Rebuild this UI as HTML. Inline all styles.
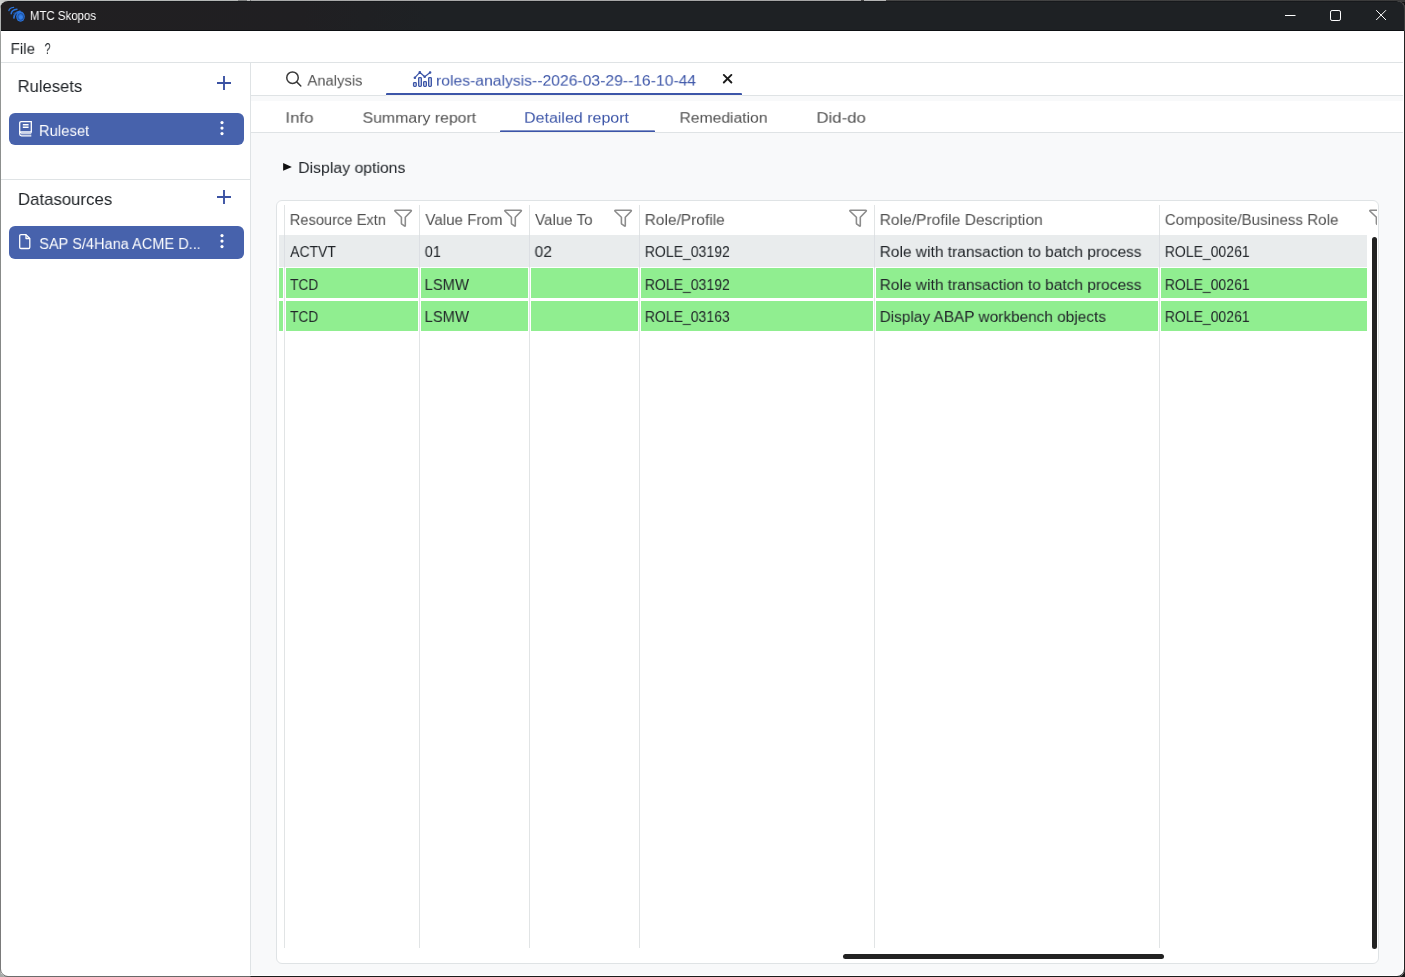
<!DOCTYPE html>
<html>
<head>
<meta charset="utf-8">
<title>MTC Skopos</title>
<style>
*{box-sizing:border-box;margin:0;padding:0}
html,body{width:1405px;height:977px;overflow:hidden;background:#fff}
body{font-family:"Liberation Sans",sans-serif;font-size:15px;color:#212529;position:relative}
.abs{position:absolute}
.t{position:absolute;white-space:nowrap;line-height:1;font-size:16px;transform-origin:0 0;will-change:transform}
/* desktop bits behind the window */
#desk{left:0;top:0;width:1405px;height:977px;background:linear-gradient(180deg,#d8dad9 0,#aaacab 30px,#a6a9a7 100%) 0 0/251px 100% no-repeat,#141414}
#toprow{left:0;top:0;width:1405px;height:2px;background:linear-gradient(90deg,#cfd1d0 0,#b8bab9 12px,#b5b7b6 238px,#7f7f7f 238px,#7f7f7f 247px,#bdbdbd 247px,#bdbdbd 250px,#777 250px,#777 251px,#aaa 251px,#a5a5a5 861px,#444 861px,#444 864px,#b5b5b5 864px,#b5b5b5 886px,#464646 886px,#3a3a3a 100%)}
/* window */
#win{left:0;top:1px;width:1405px;height:976px;border-radius:8px;background:#fff;overflow:hidden}
#bL{left:0;top:0;width:1px;height:976px;background:linear-gradient(180deg,#b6b8b7 0,#acaead 30px,#9a9d9b 34px,#8d908e 150px,#808281 500px,#7a7a7a 976px);z-index:50}
#bR{left:1404px;top:0;width:1px;height:976px;background:linear-gradient(180deg,#3c3c3c 0,#3c3c3c 30px,#232323 30px,#232323 100%);z-index:50}
#bB{left:0;top:975px;width:1405px;height:1px;background:linear-gradient(90deg,#6c6c6c 0,#666 250px,#1c1c1c 251px,#1c1c1c 100%);z-index:50}
#title{left:0;top:0;width:1405px;height:30px;background:linear-gradient(90deg,#211f21 0,#201f22 300px,#1e2124 430px,#1e2124 100%);border-bottom:1px solid #0d1013;border-top:1px solid #17191c}
/* menu */
#menu{left:1px;top:30px;width:1402px;height:32px;background:#fff;border-bottom:1px solid #dfe3e5}
/* sidebar */
#side{left:1px;top:62px;width:250px;height:912px;background:#fff;border-right:1px solid #dfe3e5}
.h{font-size:17.5px;color:#212529}
.btn{position:absolute;left:8px;width:235px;height:32px;background:#4762ac;border-radius:6px;color:#fff}
.sep{position:absolute;left:0;width:249px;height:1px;background:#dfe3e5}
/* main */
#main{left:251px;top:62px;width:1152px;height:912px;background:#f8f9fa}
#tabs1{left:0;top:0;width:1152px;height:33px;background:#fff;border-bottom:1px solid #dfe3e5}
#tabs2{left:0;top:38px;width:1152px;height:32px;background:#fff;border-bottom:1px solid #dfe3e5}
.ul{position:absolute;height:3px;background:linear-gradient(#3c55a8 0,#3c55a8 2px,#f1f2ef 2px,#f1f2ef 3px);border-radius:1px 1px 0 0}
.g{color:#495057}
.b{color:#4762ac}
/* grid */
#grid{left:25px;top:137px;width:1103px;height:764px;background:#fff;border:1px solid #dfe3e5;border-radius:6px;overflow:hidden}
.cl{position:absolute;top:4px;width:1px;height:743px;background:#e1e4e5}
.row{position:absolute;left:1px;width:1088px}
.c{position:absolute;background:#90ee90}
.hd{color:#495057}
</style>
</head>
<body>
<svg width="0" height="0" style="position:absolute"><defs><path id="fun" d="M2.500 2.300H17.700Q18.800 2.300 18.100 3.200L12.300 9.300V17.400Q12.300 18.600 11.300 17.900L8.900 16.200Q8.400 15.900 8.400 15.300V9.300L2.100 3.200Q1.400 2.300 2.500 2.300Z" fill="none" stroke="#8c8c8c" stroke-width="1.600" stroke-linejoin="round"/></defs></svg>
<div id="desk" class="abs"></div>
<div id="toprow" class="abs"></div>
<div class="abs" style="left:1395px;top:0;width:10px;height:10px;border-right:1px solid #3c3c3c;border-top:1px solid #3a3a3a;border-top-right-radius:9px;z-index:60"></div>
<div id="win" class="abs">
  <div id="title" class="abs">
    <svg class="abs" style="left:7px;top:4px" width="20" height="20" viewBox="0 0 20 20">
      <g fill="none" stroke="#2a72d8" stroke-linecap="round">
        <path d="M1.900 4.600Q2.300 1.800 6.600 1.300" stroke-width="1.300"/>
        <path d="M4.200 7.800Q4.400 3.800 10 3.200" stroke-width="1.500"/>
        <path d="M6.900 12Q6.800 6.800 13 5.400" stroke-width="1.700"/>
        <path d="M6.300 7.300L9.500 6.200M7 9L10 7.500" stroke-width="0.800" stroke="#1d4f9a"/>
      </g>
      <ellipse cx="13.500" cy="10.600" rx="4.300" ry="5.100" fill="#2a72d8"/>
      <ellipse cx="13.700" cy="10.900" rx="2.900" ry="3.400" fill="none" stroke="#1a4486" stroke-width="0.700"/>
      <circle cx="13.900" cy="11.300" r="1.700" fill="#3580e6"/>
    </svg>
    <svg class="abs" style="left:1280px;top:4px" width="120" height="22" viewBox="0 0 120 22" fill="none" stroke="#fff" stroke-width="1">
      <path d="M5 9.5H15.5"/>
      <rect x="50.500" y="4.500" width="10" height="10" rx="1.600"/>
      <path d="M96.200 4.200L106 14M106 4.200L96.200 14"/>
    </svg>
  </div>
  <div id="menu" class="abs">
  </div>
  <div id="side" class="abs">
    <svg class="abs" style="left:215px;top:12px" width="16" height="16" viewBox="0 0 16 16" stroke="#3b52a3" stroke-width="1.900" fill="none"><path d="M8 1V15M1 8H15"/></svg>
    <div class="btn" style="top:50px">
      <svg class="abs" style="left:9px;top:7px" width="16" height="18" viewBox="0 0 16 18" fill="none" stroke="#fff" stroke-width="1.300">
        <path d="M1.700 14V3.200Q1.700 1.700 3.200 1.700H13.300V12H3.500Q1.700 12 1.700 14Q1.700 15.800 3.500 15.800H13.300"/>
        <path d="M4.800 4.800H10.600M4.800 7.300H10.600" stroke-width="1.500"/>
        <path d="M3 13.800H13.300" stroke-width="1"/>
      </svg>
      <svg class="abs" style="left:209px;top:7px" width="8" height="18" viewBox="0 0 8 18" fill="#fff"><circle cx="4" cy="2.600" r="1.600"/><circle cx="4" cy="8.100" r="1.600"/><circle cx="4" cy="13.600" r="1.600"/></svg>
    </div>
    <div class="sep" style="top:116px"></div>
    <svg class="abs" style="left:215px;top:126px" width="16" height="16" viewBox="0 0 16 16" stroke="#3b52a3" stroke-width="1.900" fill="none"><path d="M8 1V15M1 8H15"/></svg>
    <div class="btn" style="top:163px;height:33px">
      <svg class="abs" style="left:9px;top:7px" width="14" height="18" viewBox="0 0 14 18" fill="none" stroke="#fff" stroke-width="1.300" stroke-linejoin="round">
        <path d="M1.700 3V14.300Q1.700 15.500 3 15.500H10.500Q11.800 15.500 11.800 14.300V5.500L8 1.700H3Q1.700 1.700 1.700 3Z"/>
        <path d="M8 1.700V5.500H11.800"/>
      </svg>
      <svg class="abs" style="left:209px;top:7px" width="8" height="18" viewBox="0 0 8 18" fill="#fff"><circle cx="4" cy="2.600" r="1.600"/><circle cx="4" cy="8.100" r="1.600"/><circle cx="4" cy="13.600" r="1.600"/></svg>
    </div>
  </div>
  <div id="main" class="abs">
    <div id="tabs1" class="abs">
      <svg class="abs" style="left:34px;top:7px" width="18" height="18" viewBox="0 0 18 18" fill="none" stroke="#3a3a3a" stroke-width="1.500" stroke-linecap="round"><circle cx="7.500" cy="7.700" r="5.750"/><path d="M11.700 11.900L15.800 16"/></svg>
      <svg class="abs" style="left:160px;top:7px" width="24" height="20" viewBox="0 0 24 20" fill="rgba(61,86,168,.28)" stroke="#3d56a8" stroke-width="1.200" stroke-linejoin="round" stroke-linecap="round">
        <path d="M3.900 7.700L8.800 2.300L13.700 6.700L19.100 2.500" fill="none"/>
        <circle cx="3.900" cy="7.700" r="0.700" fill="#3d56a8"/><circle cx="8.800" cy="2.300" r="0.700" fill="#3d56a8"/><circle cx="13.700" cy="6.700" r="0.700" fill="#3d56a8"/><circle cx="19.100" cy="2.500" r="0.700" fill="#3d56a8"/>
        <rect x="2.500" y="12.700" width="2.800" height="3.600" rx="0.800"/>
        <rect x="7.600" y="7.600" width="2.800" height="8.700" rx="0.800"/>
        <rect x="12.600" y="11.600" width="2.800" height="4.700" rx="0.800"/>
        <rect x="17.600" y="7.600" width="2.800" height="8.700" rx="0.800"/>
      </svg>
      <svg class="abs" style="left:471px;top:10px" width="12" height="12" viewBox="0 0 12 12" stroke="#1a1a1a" stroke-width="1.900" stroke-linecap="round" fill="none"><path d="M1.800 1.900L9.400 9.500M9.400 1.900L1.800 9.500"/></svg>
      <div class="ul" style="left:135px;top:30px;width:356px"></div>
    </div>
    <div id="tabs2" class="abs">
      <div class="ul" style="left:249px;top:29px;width:155px;background:linear-gradient(#8494c8 0,#8494c8 1px,#3c55a8 1px,#3c55a8 2px,#f1f2ef 2px,#f1f2ef 3px)"></div>
    </div>
    <svg class="abs" style="left:31px;top:99px" width="11" height="10" viewBox="0 0 11 10"><path d="M1.100 1.100L9.900 4.900L1.100 8.700Z" fill="#111"/></svg>
    <div id="grid" class="abs">
<div class="cl" style="left:7px"></div>
<div class="cl" style="left:142px"></div>
<div class="cl" style="left:252px"></div>
<div class="cl" style="left:362px"></div>
<div class="cl" style="left:597px"></div>
<div class="cl" style="left:882px"></div>
<svg class="abs" style="left:116px;top:7px" width="20" height="20" viewBox="0 0 20 20"><use href="#fun"/></svg>
<svg class="abs" style="left:226px;top:7px" width="20" height="20" viewBox="0 0 20 20"><use href="#fun"/></svg>
<svg class="abs" style="left:336px;top:7px" width="20" height="20" viewBox="0 0 20 20"><use href="#fun"/></svg>
<svg class="abs" style="left:571px;top:7px" width="20" height="20" viewBox="0 0 20 20"><use href="#fun"/></svg>
<div class="abs" style="left:1091px;top:7px;width:9px;height:20px;overflow:hidden"><svg class="abs" style="left:0;top:0" width="20" height="20" viewBox="0 0 20 20"><use href="#fun"/></svg></div>
<div class="abs" style="left:2px;top:34px;width:1088px;height:32px;background:#e9eced"></div>
<div class="abs" style="left:7px;top:34px;width:1px;height:32px;background:#dcdfe3"></div>
<div class="abs" style="left:142px;top:34px;width:1px;height:32px;background:#dcdfe3"></div>
<div class="abs" style="left:252px;top:34px;width:1px;height:32px;background:#dcdfe3"></div>
<div class="abs" style="left:362px;top:34px;width:1px;height:32px;background:#dcdfe3"></div>
<div class="abs" style="left:597px;top:34px;width:1px;height:32px;background:#dcdfe3"></div>
<div class="abs" style="left:882px;top:34px;width:1px;height:32px;background:#dcdfe3"></div>
<div class="c" style="left:2px;top:67px;width:4px;height:30px"></div>
<div class="c" style="left:9px;top:67px;width:132px;height:30px"></div>
<div class="c" style="left:144px;top:67px;width:107px;height:30px"></div>
<div class="c" style="left:254px;top:67px;width:107px;height:30px"></div>
<div class="c" style="left:364px;top:67px;width:232px;height:30px"></div>
<div class="c" style="left:599px;top:67px;width:282px;height:30px"></div>
<div class="c" style="left:884px;top:67px;width:206px;height:30px"></div>
<div class="c" style="left:2px;top:100px;width:4px;height:30px"></div>
<div class="c" style="left:9px;top:100px;width:132px;height:30px"></div>
<div class="c" style="left:144px;top:100px;width:107px;height:30px"></div>
<div class="c" style="left:254px;top:100px;width:107px;height:30px"></div>
<div class="c" style="left:364px;top:100px;width:232px;height:30px"></div>
<div class="c" style="left:599px;top:100px;width:282px;height:30px"></div>
<div class="c" style="left:884px;top:100px;width:206px;height:30px"></div>
<div class="abs" style="left:1095px;top:36px;width:5px;height:712px;background:#222;border-radius:3px"></div>
<div class="abs" style="left:566px;top:753px;width:321px;height:5px;background:#222;border-radius:3px"></div>
</div>
  </div>
  <div id="txt" class="abs" style="left:0;top:-1px;width:0;height:0">
<div class="t" style="left:29px;top:10px;color:#fff;font-size:12.5px;transform:translate(0.88px,0.00px) scale(0.9159,1.0000)">MTC Skopos</div>
<div class="t" style="left:10px;top:42px;color:#212529;transform:translate(0.60px,0.08px) scale(0.9439,0.9167)">File</div>
<div class="t" style="left:44px;top:42px;color:#212529;transform:translate(0.57px,0.08px) scale(0.6951,0.9167)">?</div>
<div class="t" style="left:17px;top:78px;color:#212529;font-size:17px;transform:translate(0.66px,0.00px) scale(0.9747,1.0000)">Rulesets</div>
<div class="t" style="left:38px;top:124px;color:#fff;transform:translate(0.93px,0.08px) scale(0.9270,0.9167)">Ruleset</div>
<div class="t" style="left:17px;top:191px;color:#212529;font-size:17px;transform:translate(0.94px,0.00px) scale(0.9872,1.0000)">Datasources</div>
<div class="t" style="left:39px;top:237px;color:#fff;transform:translate(0.22px,0.08px) scale(0.9100,0.9167)">SAP S/4Hana ACME D...</div>
<div class="t" style="left:307px;top:74px;color:#505050;transform:translate(0.40px,0.22px) scale(0.9254,0.8750)">Analysis</div>
<div class="t" style="left:435px;top:74px;color:#3d56a8;transform:translate(1.00px,0.22px) scale(0.9815,0.8750)">roles-analysis--2026-03-29--16-10-44</div>
<div class="t" style="left:285px;top:111px;color:#505050;transform:translate(0.42px,0.33px) scale(1.0531,0.8750)">Info</div>
<div class="t" style="left:362px;top:111px;color:#505050;transform:translate(0.56px,0.33px) scale(0.9897,0.8750)">Summary report</div>
<div class="t" style="left:524px;top:111px;color:#3d56a8;transform:translate(0.13px,0.33px) scale(0.9981,0.8750)">Detailed report</div>
<div class="t" style="left:679px;top:111px;color:#505050;transform:translate(0.55px,0.33px) scale(0.9785,0.8750)">Remediation</div>
<div class="t" style="left:816px;top:111px;color:#505050;transform:translate(0.46px,0.33px) scale(1.0482,0.8750)">Did-do</div>
<div class="t" style="left:298px;top:161px;color:#212529;transform:translate(0.24px,0.08px) scale(0.9878,0.9167)">Display options</div>
<div class="t" style="left:289px;top:213px;color:#505050;transform:translate(0.74px,0.08px) scale(0.9171,0.9167)">Resource Extn</div>
<div class="t" style="left:425px;top:213px;color:#505050;transform:translate(0.38px,0.08px) scale(0.9456,0.9167)">Value From</div>
<div class="t" style="left:535px;top:213px;color:#505050;transform:translate(0.08px,0.08px) scale(0.9433,0.9167)">Value To</div>
<div class="t" style="left:644px;top:213px;color:#505050;transform:translate(0.67px,0.08px) scale(0.9687,0.9167)">Role/Profile</div>
<div class="t" style="left:879px;top:213px;color:#505050;transform:translate(0.66px,0.08px) scale(0.9754,0.9167)">Role/Profile Description</div>
<div class="t" style="left:1164px;top:213px;color:#505050;transform:translate(0.77px,0.08px) scale(0.9481,0.9167)">Composite/Business Role</div>
<div class="t" style="left:290px;top:245px;color:#212529;transform:translate(0.20px,0.08px) scale(0.8691,0.9167)">ACTVT</div>
<div class="t" style="left:424px;top:245px;color:#212529;transform:translate(0.74px,0.08px) scale(0.9038,0.9167)">01</div>
<div class="t" style="left:534px;top:245px;color:#212529;transform:translate(0.59px,0.08px) scale(0.9710,0.9167)">02</div>
<div class="t" style="left:644px;top:245px;color:#212529;transform:translate(0.79px,0.08px) scale(0.8770,0.9167)">ROLE_03192</div>
<div class="t" style="left:879px;top:245px;color:#212529;transform:translate(0.67px,0.08px) scale(0.9688,0.9167)">Role with transaction to batch process</div>
<div class="t" style="left:1164px;top:245px;color:#212529;transform:translate(0.80px,0.08px) scale(0.8749,0.9167)">ROLE_00261</div>
<div class="t" style="left:290px;top:278px;color:#212529;transform:translate(0.08px,0.08px) scale(0.8567,0.9167)">TCD</div>
<div class="t" style="left:424px;top:278px;color:#212529;transform:translate(0.53px,0.08px) scale(0.9247,0.9167)">LSMW</div>
<div class="t" style="left:644px;top:278px;color:#212529;transform:translate(0.79px,0.08px) scale(0.8770,0.9167)">ROLE_03192</div>
<div class="t" style="left:879px;top:278px;color:#212529;transform:translate(0.67px,0.08px) scale(0.9688,0.9167)">Role with transaction to batch process</div>
<div class="t" style="left:1164px;top:278px;color:#212529;transform:translate(0.80px,0.08px) scale(0.8749,0.9167)">ROLE_00261</div>
<div class="t" style="left:290px;top:310px;color:#212529;transform:translate(0.08px,0.08px) scale(0.8567,0.9167)">TCD</div>
<div class="t" style="left:424px;top:310px;color:#212529;transform:translate(0.53px,0.08px) scale(0.9247,0.9167)">LSMW</div>
<div class="t" style="left:644px;top:310px;color:#212529;transform:translate(0.80px,0.08px) scale(0.8759,0.9167)">ROLE_03163</div>
<div class="t" style="left:879px;top:310px;color:#212529;transform:translate(0.68px,0.08px) scale(0.9611,0.9167)">Display ABAP workbench objects</div>
<div class="t" style="left:1164px;top:310px;color:#212529;transform:translate(0.80px,0.08px) scale(0.8749,0.9167)">ROLE_00261</div>
</div>
  <div class="abs" style="left:0;top:967px;width:9px;height:9px;border-left:1px solid #7a7a7a;border-bottom:1px solid #6c6c6c;border-bottom-left-radius:8px;z-index:51"></div>
  <div class="abs" style="left:1396px;top:967px;width:9px;height:9px;border-right:1px solid #232323;border-bottom:1px solid #1c1c1c;border-bottom-right-radius:8px;z-index:51"></div>
  <div id="bL" class="abs"></div><div id="bR" class="abs"></div><div id="bB" class="abs"></div>
</div>
</body>
</html>
